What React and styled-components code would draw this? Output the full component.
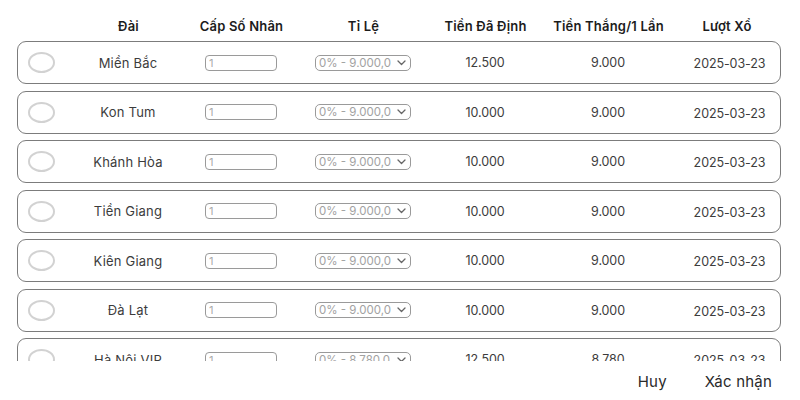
import React from 'react';
import styled, { createGlobalStyle } from 'styled-components';

const GlobalStyle = createGlobalStyle`
  html, body {
    margin: 0;
    padding: 0;
    background: #fff;
    font-family: Inter, "Noto Sans", sans-serif;
  }
`;

const COLS = '54px 112px 114px 130px 114px 132px 1fr';

const Page = styled.div`
  width: 800px;
  height: 400px;
  display: flex;
  flex-direction: column;
  overflow: hidden;
`;

const ScrollArea = styled.div`
  height: 361px;
  overflow-y: scroll;
  padding: 0 19px 0 17px;
  box-sizing: border-box;
  scrollbar-width: none;

  &::-webkit-scrollbar {
    display: none;
  }
`;

const HeaderRow = styled.div`
  display: grid;
  grid-template-columns: ${COLS};
  padding: 17px 1.5px 0;
  height: 41px;
  box-sizing: border-box;
`;

const HeadCell = styled.div`
  text-align: center;
  font-size: 13px;
  font-weight: 600;
  line-height: 18px;
  letter-spacing: 0.2px;
  color: #1c1c1c;
  white-space: nowrap;
`;

const List = styled.div`
  display: flex;
  flex-direction: column;
  gap: 6.5px;
`;

const Row = styled.div`
  display: grid;
  grid-template-columns: ${COLS};
  align-items: center;
  height: 43px;
  flex-shrink: 0;
  box-sizing: border-box;
  border: 1.5px solid #7c7c7c;
  border-radius: 9px;
`;

const Radio = styled.span`
  width: 27px;
  height: 21px;
  margin-left: 10px;
  box-sizing: border-box;
  border: 2px solid #d2d2d2;
  border-radius: 50%;
`;

const Cell = styled.div`
  text-align: center;
  font-size: ${(p) => (p.$num ? '12.5px' : '13px')};
  letter-spacing: ${(p) => (p.$num ? '-0.1px' : '0.2px')};
  color: #3c3c3c;
  white-space: nowrap;
  padding-top: ${(p) => (p.$date ? '2px' : '0')};
  padding-left: ${(p) => (p.$date ? '5px' : '0')};
`;

const Centered = styled.div`
  display: flex;
  justify-content: center;
`;

const NumInput = styled.input`
  width: 72px;
  height: 16px;
  box-sizing: border-box;
  border: 1px solid #9a9a9a;
  border-radius: 4px;
  padding: 0 3px;
  font-family: inherit;
  font-size: 11px;
  color: #aaa;
  outline: none;
`;

const SelectBox = styled.div`
  width: 96px;
  height: 16px;
  box-sizing: border-box;
  border: 1px solid #9a9a9a;
  border-radius: 5px;
  display: flex;
  align-items: center;
  justify-content: space-between;
  padding: 0 4px 0 3px;
  font-size: 11.5px;
  color: #a2a2a2;
  white-space: nowrap;

  svg {
    flex-shrink: 0;
  }
`;

const Footer = styled.div`
  flex: 1;
  display: flex;
  justify-content: flex-end;
  align-items: center;
  gap: 38px;
  padding: 2px 28px 0 0;
`;

const TextButton = styled.button`
  border: none;
  background: none;
  padding: 0;
  font-family: inherit;
  font-size: 15px;
  letter-spacing: 0.2px;
  color: #2a2a2a;
  cursor: pointer;
`;

const rows = [
  { name: 'Miền Bắc', rate: '0% - 9.000,0', fixed: '12.500', win: '9.000' },
  { name: 'Kon Tum', rate: '0% - 9.000,0', fixed: '10.000', win: '9.000' },
  { name: 'Khánh Hòa', rate: '0% - 9.000,0', fixed: '10.000', win: '9.000' },
  { name: 'Tiền Giang', rate: '0% - 9.000,0', fixed: '10.000', win: '9.000' },
  { name: 'Kiên Giang', rate: '0% - 9.000,0', fixed: '10.000', win: '9.000' },
  { name: 'Đà Lạt', rate: '0% - 9.000,0', fixed: '10.000', win: '9.000' },
  { name: 'Hà Nội VIP', rate: '0% - 8.780,0', fixed: '12.500', win: '8.780' },
];

function Chevron() {
  return (
    <svg width="9" height="6" viewBox="0 0 9 6" fill="none">
      <path d="M1 1l3.5 3.5L8 1" stroke="#666" strokeWidth="1.3" strokeLinecap="round" strokeLinejoin="round" />
    </svg>
  );
}

export default function App() {
  return (
    <Page>
      <GlobalStyle />
      <ScrollArea>
        <HeaderRow>
          <div />
          <HeadCell>Đài</HeadCell>
          <HeadCell>Cấp Số Nhân</HeadCell>
          <HeadCell>Tỉ Lệ</HeadCell>
          <HeadCell>Tiền Đã Định</HeadCell>
          <HeadCell>Tiền Thắng/1 Lần</HeadCell>
          <HeadCell>Lượt Xổ</HeadCell>
        </HeaderRow>
        <List>
          {rows.map((r) => (
            <Row key={r.name}>
              <Radio />
              <Cell>{r.name}</Cell>
              <Centered>
                <NumInput defaultValue="1" />
              </Centered>
              <Centered>
                <SelectBox>
                  <span>{r.rate}</span>
                  <Chevron />
                </SelectBox>
              </Centered>
              <Cell $num>{r.fixed}</Cell>
              <Cell $num>{r.win}</Cell>
              <Cell $num $date>2025-03-23</Cell>
            </Row>
          ))}
        </List>
      </ScrollArea>
      <Footer>
        <TextButton>Huy</TextButton>
        <TextButton>Xác nhận</TextButton>
      </Footer>
    </Page>
  );
}
